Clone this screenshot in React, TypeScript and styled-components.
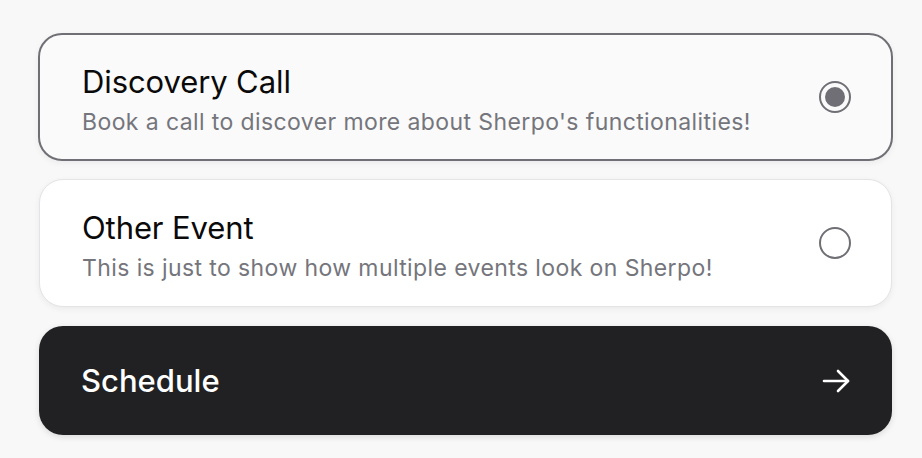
import React, { useState } from "react";
import styled, { createGlobalStyle } from "styled-components";

const Global = createGlobalStyle`
  html, body { margin: 0; padding: 0; background: #f8f8f8; }
  body { font-family: Inter, "Noto Sans", sans-serif; -webkit-font-smoothing: antialiased; }
`;

const Page = styled.div`
  padding: 33px 29px 24px 38px;
  display: flex;
  flex-direction: column;
  gap: 18px;
  width: 855px;
`;

const Card = styled.label<{ $active: boolean }>`
  box-sizing: border-box;
  display: flex;
  align-items: center;
  justify-content: space-between;
  height: 128px;
  padding: 0 40px 0 42px;
  border-radius: 24px;
  border: ${(p) => (p.$active ? "2px solid #6f6f75" : "1.5px solid #e4e4e6")};
  background: ${(p) => (p.$active ? "#fafafa" : "#ffffff")};
  box-shadow: 0 2px 6px rgba(0, 0, 0, 0.06);
  margin: ${(p) => (p.$active ? "0" : "0 1px")};
  cursor: pointer;
`;

const Texts = styled.div`
  display: flex;
  flex-direction: column;
  gap: 7px;
  padding-top: 4px;
`;

const Title = styled.div`
  font-size: 31px;
  font-weight: 400;
  color: #0a0a0a;
  line-height: 38px;
  letter-spacing: -0.1px;
`;

const Sub = styled.div`
  font-size: 23px;
  color: #75757c;
  line-height: 28px;
  letter-spacing: 0.4px;
`;

const Radio = styled.span<{ $checked: boolean }>`
  box-sizing: border-box;
  width: 32px;
  height: 32px;
  border-radius: 50%;
  border: 2px solid #6f6f75;
  display: flex;
  align-items: center;
  justify-content: center;
  &::after {
    content: "";
    width: 20px;
    height: 20px;
    border-radius: 50%;
    background: #6f6f75;
    display: ${(p) => (p.$checked ? "block" : "none")};
  }
`;

const Button = styled.button`
  box-sizing: border-box;
  margin: 1px 1px 0;
  height: 109px;
  border: none;
  border-radius: 24px;
  background: #212123;
  color: #fff;
  display: flex;
  align-items: center;
  justify-content: space-between;
  padding: 0 42px 0 42px;
  font-family: Inter, "Noto Sans", sans-serif;
  font-size: 31px;
  font-weight: 500;
  box-shadow: 0 2px 6px rgba(0, 0, 0, 0.12);
  cursor: pointer;
`;

const events = [
  { title: "Discovery Call", sub: "Book a call to discover more about Sherpo's functionalities!" },
  { title: "Other Event", sub: "This is just to show how multiple events look on Sherpo!" },
];

export default function App() {
  const [sel, setSel] = useState(0);
  return (
    <>
      <Global />
      <Page>
        {events.map((e, i) => (
          <Card key={e.title} $active={sel === i} onClick={() => setSel(i)}>
            <Texts>
              <Title>{e.title}</Title>
              <Sub>{e.sub}</Sub>
            </Texts>
            <Radio $checked={sel === i} />
          </Card>
        ))}
        <Button>
          <span>Schedule</span>
          <svg width="28" height="24" viewBox="0 0 28 24" fill="none" stroke="#fff" strokeWidth="2.6" strokeLinecap="round" strokeLinejoin="round">
            <path d="M2 12H26" />
            <path d="M16 2L26 12L16 22" />
          </svg>
        </Button>
      </Page>
    </>
  );
}
